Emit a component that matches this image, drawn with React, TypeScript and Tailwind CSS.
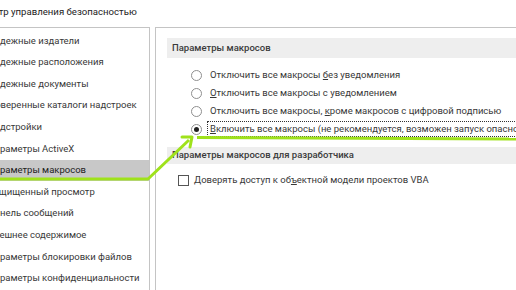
import React from 'react';

const navItems = [
  'Надежные издатели',
  'Надежные расположения',
  'Надежные документы',
  'Доверенные каталоги надстроек',
  'Надстройки',
  'Параметры ActiveX',
  'Параметры макросов',
  'Защищенный просмотр',
  'Панель сообщений',
  'Внешнее содержимое',
  'Параметры блокировки файлов',
  'Параметры конфиденциальности',
];

function Radio({ checked }: { checked?: boolean }) {
  return (
    <span className="flex h-[11px] w-[11px] shrink-0 items-center justify-center rounded-full border border-[#8f8f8f] bg-white">
      {checked && <span className="h-[5px] w-[5px] rounded-full bg-[#222]" />}
    </span>
  );
}

export default function App() {
  return (
    <div
      className="relative h-[290px] w-[516px] overflow-hidden bg-white text-[9.5px] text-[#383838]"
      style={{ fontFamily: 'Roboto, "Noto Sans", sans-serif' }}
    >
      <div className="flex h-[27px] items-center pb-[3px] text-[9.6px] text-[#222]">
        <span className="-ml-[19px] whitespace-nowrap">Центр управления безопасностью</span>
      </div>

      <div className="flex h-[263px]">
        {/* left nav */}
        <div className="w-[150px] shrink-0 overflow-hidden border-r border-t border-[#c4c4c4] pt-[2px]">
          {navItems.map((item, i) => (
            <div
              key={i}
              className={`flex h-[21.6px] items-center whitespace-nowrap ${i === 6 ? 'bg-[#c8c8c8] text-[#222]' : ''}`}
            >
              <span className="-ml-[12px]">{item}</span>
            </div>
          ))}
        </div>

        {/* right panel */}
        <div className="ml-[5px] flex-1 border-l border-t border-[#c4c4c4] pl-[11px] pt-[10px]">
          <div className="flex h-[20px] items-center bg-[#eeeeee] pl-[5px] font-medium text-[#3a3a3a]">
            Параметры макросов
          </div>
          <div className="flex flex-col pl-[24px] pt-[8px]">
            <div className="flex h-[18px] items-center gap-[8px] whitespace-nowrap">
              <Radio />
              <span>Отключить все макросы <u>б</u>ез уведомления</span>
            </div>
            <div className="flex h-[18px] items-center gap-[8px] whitespace-nowrap">
              <Radio />
              <span><u>О</u>тключить все макросы с уведомлением</span>
            </div>
            <div className="flex h-[18px] items-center gap-[8px] whitespace-nowrap">
              <Radio />
              <span>Отключить все макросы, <u>к</u>роме макросов с цифровой подписью</span>
            </div>
            <div className="flex h-[18px] items-center gap-[5px] whitespace-nowrap">
              <Radio checked />
              <span className="border border-dotted border-[#333] px-[2px] leading-[14px]">
                <u>В</u>ключить все макросы (не рекомендуется, возможен запуск опасной программы)
              </span>
            </div>
          </div>

          <div className="mt-[9px] flex h-[17px] items-center whitespace-nowrap bg-[#eeeeee] pl-[5px] font-medium text-[#3a3a3a]">
            Параметры макросов для разработчика
          </div>
          <div className="flex h-[18px] items-center gap-[5px] whitespace-nowrap pl-[11px] pt-[14px]">
            <span className="h-[11px] w-[11px] shrink-0 border border-[#555] bg-white" />
            <span>Доверять доступ к об<u>ъ</u>ектной модели проектов VBA</span>
          </div>
        </div>
      </div>

      {/* green annotation arrow */}
      <svg className="absolute left-0 top-0" width="516" height="290" viewBox="0 0 516 290">
        <polyline
          points="0,179 148,179 189,140"
          fill="none"
          stroke="#9fe21b"
          strokeWidth="3"
          strokeLinejoin="round"
        />
        <polyline
          points="182,137 192,137 190,147"
          fill="none"
          stroke="#9fe21b"
          strokeWidth="3"
          strokeLinejoin="round"
          strokeLinecap="round"
        />
        <path d="M197 137.5 L516 139" stroke="#9fe21b" strokeWidth="3" fill="none" />
      </svg>
    </div>
  );
}
